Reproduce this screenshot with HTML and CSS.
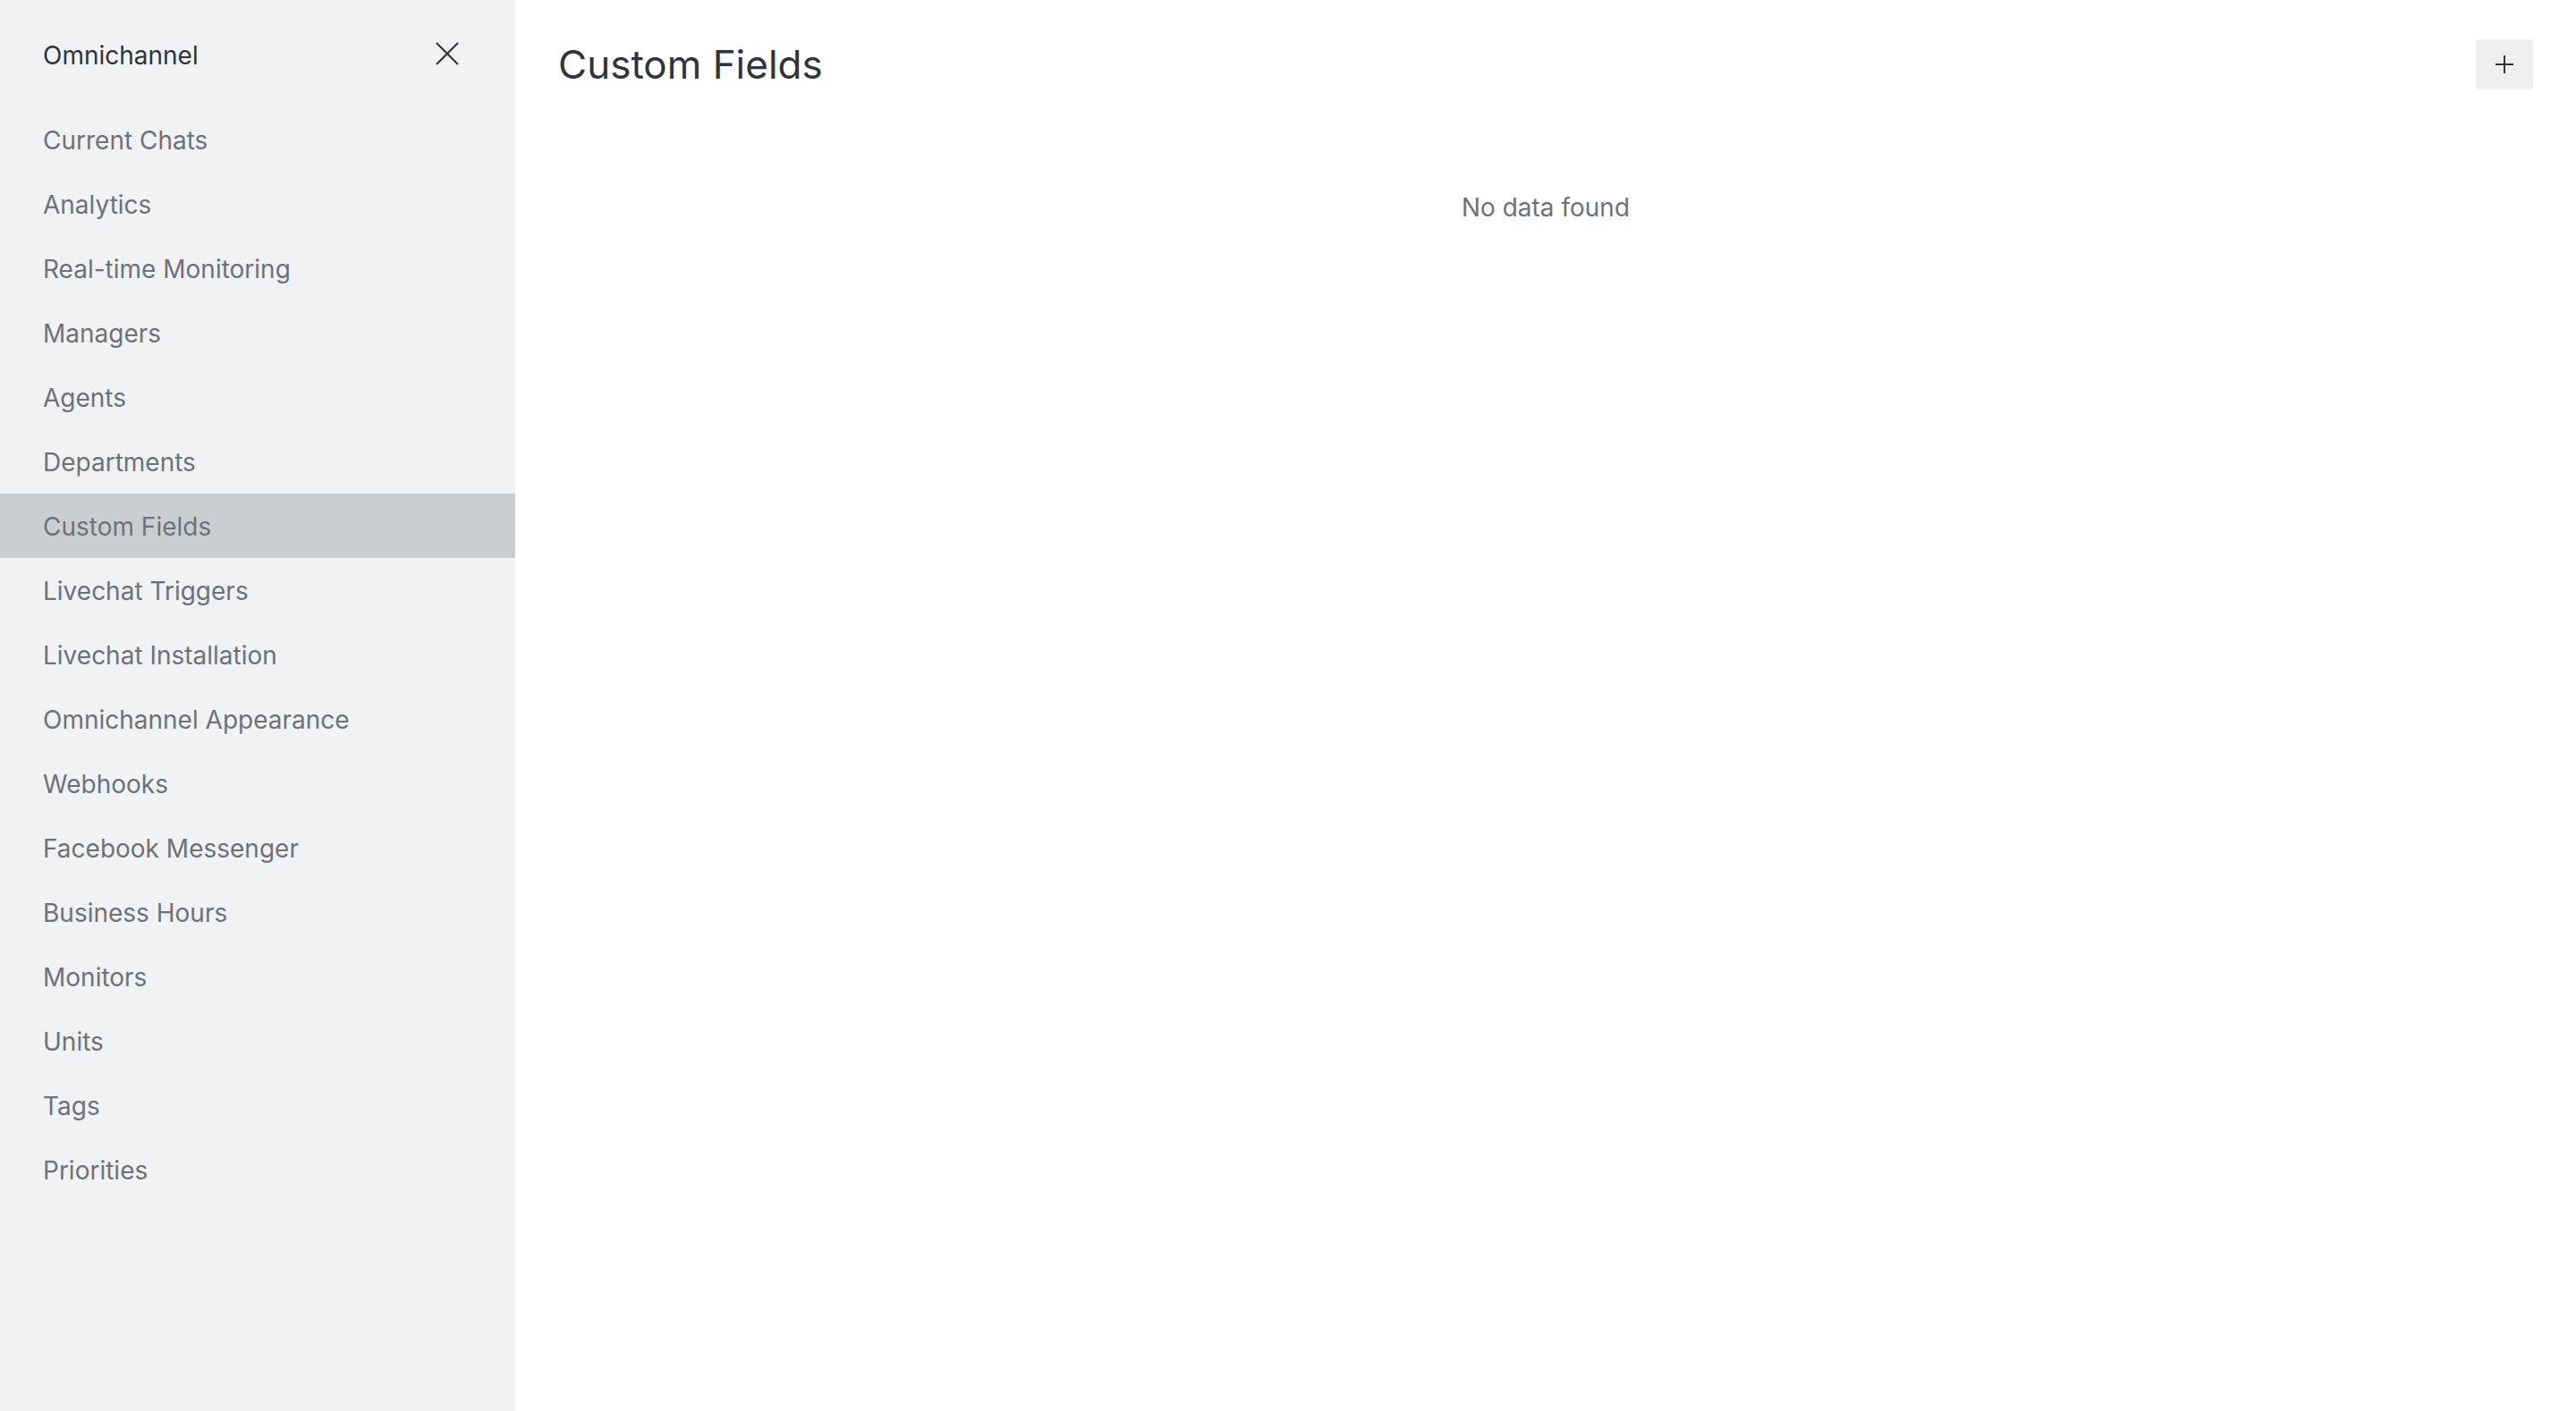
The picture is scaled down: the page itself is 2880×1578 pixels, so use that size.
FILE: index.html
```html
<!DOCTYPE html>
<html lang="en">
<head>
<meta charset="utf-8">
<title>Custom Fields</title>
<link rel="stylesheet" href="styles.css">
</head>
<body>
<div class="app">
  <aside class="sidebar">
    <div class="sidebar-header">
      <span class="sidebar-title">Omnichannel</span>
      <button class="close-btn" aria-label="Close">
        <svg viewBox="0 0 28 28" width="28" height="28"><path d="M2 2L26 26M26 2L2 26" stroke="#2f343d" stroke-width="2.2" fill="none"/></svg>
      </button>
    </div>
    <nav class="nav">
      <a class="nav-item">Current Chats</a>
      <a class="nav-item">Analytics</a>
      <a class="nav-item">Real-time Monitoring</a>
      <a class="nav-item">Managers</a>
      <a class="nav-item">Agents</a>
      <a class="nav-item">Departments</a>
      <a class="nav-item active">Custom Fields</a>
      <a class="nav-item">Livechat Triggers</a>
      <a class="nav-item">Livechat Installation</a>
      <a class="nav-item">Omnichannel Appearance</a>
      <a class="nav-item">Webhooks</a>
      <a class="nav-item">Facebook Messenger</a>
      <a class="nav-item">Business Hours</a>
      <a class="nav-item">Monitors</a>
      <a class="nav-item">Units</a>
      <a class="nav-item">Tags</a>
      <a class="nav-item">Priorities</a>
    </nav>
  </aside>
  <main class="main">
    <header class="page-header">
      <h1 class="page-title">Custom Fields</h1>
      <button class="add-btn" aria-label="Add">
        <svg viewBox="0 0 22 22" width="22" height="22"><path d="M11 1V21M1 11H21" stroke="#2f343d" stroke-width="2" fill="none"/></svg>
      </button>
    </header>
    <section class="content">
      <p class="empty">No data found</p>
    </section>
  </main>
</div>
</body>
</html>
```

FILE: styles.css
```css
html, body {
  margin: 0;
  padding: 0;
  height: 100%;
}
body {
  font-family: Inter, "Noto Sans", sans-serif;
  background: #ffffff;
  color: #2f343d;
}
.app {
  display: flex;
  height: 100vh;
}
.sidebar {
  width: 576px;
  flex: 0 0 576px;
  background: #f1f2f4;
  display: flex;
  flex-direction: column;
}
.sidebar-header {
  height: 120px;
  display: flex;
  align-items: center;
  justify-content: space-between;
  padding: 0 62px 0 48px;
}
.sidebar-title {
  font-size: 28px;
  color: #2f343d;
  margin-top: 4px;
}
.close-btn {
  background: none;
  border: 0;
  padding: 0;
  display: flex;
  cursor: pointer;
}
.nav {
  display: flex;
  flex-direction: column;
}
.nav-item {
  box-sizing: border-box;
  height: 72px;
  display: flex;
  align-items: center;
  padding: 1px 0 0 48px;
  font-size: 28px;
  color: #6c727a;
}
.nav-item.active {
  background: #cbced1;
}
.main {
  flex: 1;
  display: flex;
  flex-direction: column;
}
.page-header {
  height: 144px;
  display: flex;
  align-items: center;
  justify-content: space-between;
  padding: 0 48px;
}
.page-title {
  margin: 0;
  font-size: 44px;
  font-weight: 400;
  color: #2f343d;
}
.add-btn {
  width: 64px;
  height: 56px;
  background: #eeeff1;
  border: 0;
  border-radius: 4px;
  display: flex;
  align-items: center;
  justify-content: center;
  padding: 0;
}
.content {
  padding-top: 68px;
  display: flex;
  justify-content: center;
}
.empty {
  margin: 0;
  font-size: 28px;
  line-height: 40px;
  color: #6c727a;
}
```
